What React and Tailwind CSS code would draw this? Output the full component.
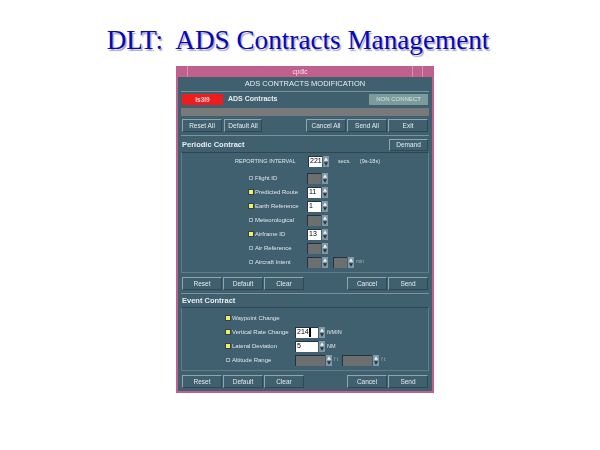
import React from "react";

const panelBtn =
  "h-[13px] flex items-center justify-center text-[6.5px] text-[#e4ecee] bg-[#41606f] border border-t-[#8fa6b0] border-l-[#8fa6b0] border-r-[#2f4855] border-b-[#2f4855]";

function Btn({ label, className = "" }) {
  return <div className={`${panelBtn} ${className}`}>{label}</div>;
}

function Arrows() {
  return (
    <div className="w-[6px] h-[11px] ml-[1px] bg-[#7f98a3] flex flex-col justify-between items-center py-[1px]">
      <svg width="4" height="4" viewBox="0 0 6 5"><path d="M3 0 L6 5 L0 5 Z" fill="#eef3f4" /></svg>
      <svg width="4" height="4" viewBox="0 0 6 5"><path d="M0 0 L6 0 L3 5 Z" fill="#1f333d" /></svg>
    </div>
  );
}

function Spinner({ value, width = "w-[14px]" }) {
  const on = value !== undefined;
  return (
    <div className="flex items-center">
      <div
        className={`${width} h-[11px] flex items-center pl-[1px] text-[7px] text-black border-t border-l border-t-[#24343c] border-l-[#24343c] ${
          on ? "bg-white" : "bg-[#6b6f70]"
        }`}
      >
        {value}
      </div>
      <Arrows />
    </div>
  );
}

function Check({ on }) {
  return on ? (
    <div className="w-[4px] h-[4px] bg-[#f2f060] outline outline-1 outline-[#2c4450]" />
  ) : (
    <div className="w-[4px] h-[4px] border border-[#9aaab2]" />
  );
}

function Row({ on, label, value, noSpin, children, labelWidth = "w-[52px]", gap = "gap-[2px]" }) {
  return (
    <div className="h-[14px] flex items-center">
      <Check on={on} />
      <span className={`${labelWidth} ml-[2px] text-[6px] text-[#dfe7ea] whitespace-nowrap`}>{label}</span>
      <div className={`flex items-center ${gap}`}>
        {!noSpin && <Spinner value={value} />}
        {children}
      </div>
    </div>
  );
}

function ButtonBar() {
  return (
    <div className="flex mt-[4px] px-[1px]">
      <div className="flex gap-[1px]">
        <Btn label="Reset" className="w-[40px]" />
        <Btn label="Default" className="w-[40px]" />
        <Btn label="Clear" className="w-[40px]" />
      </div>
      <div className="flex gap-[1px] ml-auto">
        <Btn label="Cancel" className="w-[40px]" />
        <Btn label="Send" className="w-[40px]" />
      </div>
    </div>
  );
}

export default function App() {
  return (
    <div className="w-[600px] h-[450px] bg-white overflow-hidden flex flex-col items-center font-['Liberation_Sans',sans-serif]">
      <h1 className="mt-[22px] mr-[4px] h-[36px] leading-[36px] text-[27.2px] text-[#0808b8] whitespace-pre font-['Liberation_Serif',serif] [text-shadow:1.5px_1.5px_1px_#a8a8c8]">
        DLT:  ADS Contracts Management
      </h1>

      <div className="mt-[8px] ml-[10px] w-[258px] h-[327px] bg-[#41606f] border-2 border-[#c0608c] border-t-0 blur-[0.4px]">
        {/* title bar */}
        <div className="h-[11px] bg-[#c0608c] flex items-center text-[6.5px] text-[#f4dce8]">
          <div className="w-[10px] h-full border-r border-[#d88cb0]" />
          <span className="flex-1 text-center">cpdlc</span>
          <div className="w-[10px] h-full border-l border-[#d88cb0]" />
          <div className="w-[10px] h-full border-l border-[#d88cb0]" />
        </div>

        <div className="px-[3px]">
          <div className="h-[15px] flex items-center justify-center text-[7.5px] text-[#e8eef0] border-b border-[#7a929c]">
            ADS CONTRACTS MODIFICATION
          </div>

          <div className="mt-[2px] h-[11px] flex items-center">
            <div className="w-[41px] h-full ml-[1px] bg-[#ee1c1c] flex items-center justify-center text-[6.5px] font-bold text-[#ffd8d8]">
              ls3l9
            </div>
            <span className="ml-[5px] text-[7px] font-bold text-[#e8eef0]">ADS Contracts</span>
            <div className="ml-auto mr-[1px] w-[59px] h-full bg-[#7c9c9c] flex items-center justify-center text-[6px] text-[#d4e2e2]">
              NON CONNECT
            </div>
          </div>

          <div className="mt-[3px] h-[8px] bg-[#77797a]" />

          <div className="mt-[3px] flex px-[1px] pb-[3px] border-b border-[#7a929c]">
            <div className="flex gap-[2px]">
              <Btn label="Reset All" className="w-[40px]" />
              <Btn label="Default All" className="w-[38px]" />
            </div>
            <div className="flex gap-[1px] ml-auto">
              <Btn label="Cancel All" className="w-[40px]" />
              <Btn label="Send All" className="w-[40px]" />
              <Btn label="Exit" className="w-[40px]" />
            </div>
          </div>

          <div className="mt-[3px] h-[12px] flex items-center justify-between">
            <span className="ml-[1px] text-[7.5px] font-bold text-[#e8eef0]">Periodic Contract</span>
            <Btn label="Demand" className="w-[39px] !h-[12px] mr-[1px]" />
          </div>

          {/* periodic frame */}
          <div className="mt-[1px] h-[121px] border border-[#5f7c89] border-t-[#2f4652] flex flex-col">
            <div className="h-[16px] pl-[53px] flex items-center">
              <span className="w-[73px] text-[5.5px] text-[#dfe7ea] whitespace-nowrap">REPORTING INTERVAL</span>
              <Spinner value="221" />
              <span className="ml-[9px] text-[5.5px] text-[#dfe7ea]">secs.</span>
              <span className="ml-[9px] text-[5.5px] text-[#dfe7ea]">(9s-18s)</span>
            </div>
            <div className="mt-[2px] pl-[67px]">
              <Row label="Flight ID" />
              <Row on label="Predicted Route" value="11" />
              <Row on label="Earth Reference" value="1" />
              <Row label="Meteorological" />
              <Row on label="Airframe ID" value="13" />
              <Row label="Air Reference" />
              <Row label="Aircraft Intent">
                <div className="ml-[3px]"><Spinner /></div>
                <span className="text-[5px] text-[#9fb2ba]">min</span>
              </Row>
            </div>
          </div>

          <ButtonBar />
          <div className="mt-[3px] border-b border-[#7a929c]" />

          <div className="h-[12px] mt-[1px] ml-[1px] flex items-center text-[7.5px] font-bold text-[#e8eef0]">Event Contract</div>

          {/* event frame */}
          <div className="h-[64px] border border-[#5f7c89] border-t-[#2f4652] pl-[44px] pt-[3px]">
            <Row on label="Waypoint Change" noSpin />
            <Row on label="Vertical Rate Change" labelWidth="w-[63px]" noSpin>
              <div className="flex items-center">
                <div className="w-[23px] h-[11px] bg-white border-t border-l border-[#24343c] flex items-center pl-[1px] text-[7px] text-black">
                  214<span className="w-[2px] h-[9px] bg-black" />
                </div>
                <Arrows />
              </div>
              <span className="text-[5.5px] text-[#dfe7ea]">ft/MIN</span>
            </Row>
            <Row on label="Lateral Deviation" labelWidth="w-[63px]" noSpin>
              <div className="flex items-center">
                <div className="w-[23px] h-[11px] bg-white border-t border-l border-[#24343c] flex items-center pl-[1px] text-[7px] text-black">5</div>
                <Arrows />
              </div>
              <span className="text-[5.5px] text-[#dfe7ea]">NM</span>
            </Row>
            <Row label="Altitude Range" labelWidth="w-[63px]" noSpin>
              <div className="flex items-center">
                <Spinner width="w-[30px]" />
                <span className="ml-[2px] mr-[4px] text-[5px] text-[#9fb2ba]">f t</span>
                <Spinner width="w-[30px]" />
                <span className="ml-[2px] text-[5px] text-[#9fb2ba]">f t</span>
              </div>
            </Row>
          </div>

          <ButtonBar />
        </div>
      </div>
    </div>
  );
}
